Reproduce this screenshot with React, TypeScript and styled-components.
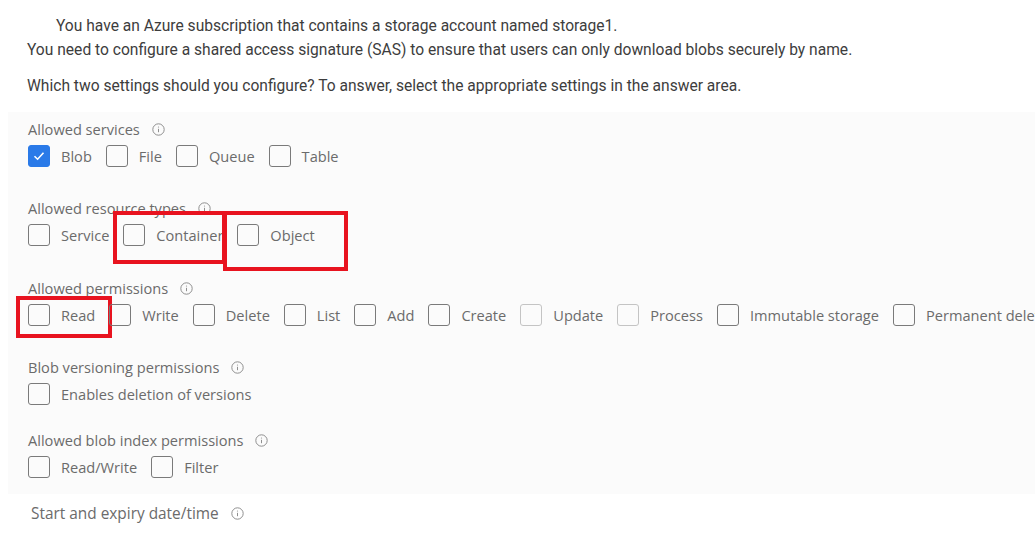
import React from "react";
import styled, { createGlobalStyle } from "styled-components";

const Global = createGlobalStyle`
  html, body { margin: 0; padding: 0; background: #ffffff; }
  body { width: 1035px; height: 536px; overflow: hidden; }
`;

const Page = styled.div`
  display: flex;
  flex-direction: column;
  width: 1035px;
  height: 536px;
  overflow: hidden;
  background: #ffffff;
`;

const Question = styled.div`
  display: flex;
  flex-direction: column;
  padding: 14px 0 0 27px;
  font-family: Roboto, "Liberation Sans", sans-serif;
  font-size: 15.6px;
  color: #3d3d3d;
`;

const QLine = styled.p<{ $indent?: number; $gap?: number }>`
  margin: ${(p) => p.$gap ?? 0}px 0 0 ${(p) => p.$indent ?? 0}px;
  line-height: 24px;
  white-space: nowrap;
`;

const Panel = styled.div`
  display: flex;
  flex-direction: column;
  margin: 14px 0 0 8px;
  padding: 7px 0 17px 20px;
  background: #fbfbfb;
  font-family: "Open Sans", "Noto Sans", sans-serif;
  font-size: 14.6px;
  color: #6b6b6b;
  overflow: hidden;
`;

const Section = styled.div<{ $after?: number }>`
  display: flex;
  flex-direction: column;
  gap: 6px;
  margin-bottom: ${(p) => p.$after ?? 0}px;
`;

const LabelRow = styled.div`
  display: flex;
  align-items: center;
  gap: 12px;
  height: 20px;
  white-space: nowrap;
`;

const Row = styled.div`
  display: flex;
  align-items: center;
  gap: 14px;
  height: 22px;
  white-space: nowrap;
`;

const Item = styled.div`
  position: relative;
  display: flex;
  align-items: center;
  gap: 11px;
  flex-shrink: 0;
`;

const Box = styled.span<{ $checked?: boolean; $faint?: boolean }>`
  display: inline-flex;
  align-items: center;
  justify-content: center;
  box-sizing: border-box;
  width: 22px;
  height: 22px;
  border-radius: 3px;
  border: 1.5px solid
    ${(p) => (p.$checked ? "#2a7ae8" : p.$faint ? "#c4c4c4" : "#7a7a7a")};
  background: ${(p) => (p.$checked ? "#2a7ae8" : "transparent")};
`;

const ItemText = styled.span`
  color: #6b6b6b;
`;

const Frame = styled.div<{ $t: number; $l: number; $r: number; $b: number }>`
  position: absolute;
  top: ${(p) => p.$t}px;
  left: ${(p) => p.$l}px;
  right: ${(p) => p.$r}px;
  bottom: ${(p) => p.$b}px;
  border: 4px solid #e8131f;
  pointer-events: none;
`;

const Bottom = styled.div`
  display: flex;
  align-items: center;
  gap: 12px;
  width: 246px;
  height: 38px;
  margin-left: 16px;
  padding: 0 0 4px 15px;
  background: #ffffff;
  font-family: "Open Sans", "Noto Sans", sans-serif;
  font-size: 15.4px;
  color: #6b6b6b;
  white-space: nowrap;
`;

const Info = () => (
  <svg width="13" height="13" viewBox="0 0 13 13">
    <circle cx="6.5" cy="6.5" r="5.7" fill="none" stroke="#8f8f8f" strokeWidth="1" />
    <line x1="6.5" y1="5.8" x2="6.5" y2="9.2" stroke="#8f8f8f" strokeWidth="1" />
    <circle cx="6.5" cy="4" r="0.6" fill="#8f8f8f" />
  </svg>
);

const Check = () => (
  <svg width="14" height="14" viewBox="0 0 14 14">
    <path d="M2.5 7.2 L5.6 10.2 L11.5 3.8" fill="none" stroke="#ffffff" strokeWidth="1.6" />
  </svg>
);

type Opt = {
  label: string;
  checked?: boolean;
  faint?: boolean;
  frame?: { t: number; l: number; r: number; b: number };
};

const Option = ({ o }: { o: Opt }) => (
  <Item>
    <Box $checked={o.checked} $faint={o.faint}>
      {o.checked && <Check />}
    </Box>
    <ItemText>{o.label}</ItemText>
    {o.frame && <Frame $t={o.frame.t} $l={o.frame.l} $r={o.frame.r} $b={o.frame.b} />}
  </Item>
);

const sections: { label: string; after: number; options: Opt[] }[] = [
  {
    label: "Allowed services",
    after: 31,
    options: [
      { label: "Blob", checked: true },
      { label: "File" },
      { label: "Queue" },
      { label: "Table" },
    ],
  },
  {
    label: "Allowed resource types",
    after: 32,
    options: [
      { label: "Service" },
      { label: "Container", frame: { t: -13, l: -10, r: -3, b: -18 } },
      { label: "Object", frame: { t: -13, l: -14, r: -33, b: -25 } },
    ],
  },
  {
    label: "Allowed permissions",
    after: 31,
    options: [
      { label: "Read", frame: { t: -8, l: -12, r: -17, b: -12 } },
      { label: "Write" },
      { label: "Delete" },
      { label: "List" },
      { label: "Add" },
      { label: "Create" },
      { label: "Update", faint: true },
      { label: "Process", faint: true },
      { label: "Immutable storage" },
      { label: "Permanent delete" },
    ],
  },
  {
    label: "Blob versioning permissions",
    after: 25,
    options: [{ label: "Enables deletion of versions" }],
  },
  {
    label: "Allowed blob index permissions",
    after: 0,
    options: [{ label: "Read/Write" }, { label: "Filter" }],
  },
];

export default function App() {
  return (
    <Page>
      <Global />
      <Question>
        <QLine $indent={29}>
          You have an Azure subscription that contains a storage account named storage1.
        </QLine>
        <QLine>
          You need to configure a shared access signature (SAS) to ensure that users can only
          download blobs securely by name.
        </QLine>
        <QLine $gap={12}>
          Which two settings should you configure? To answer, select the appropriate settings in
          the answer area.
        </QLine>
      </Question>
      <Panel>
        {sections.map((s) => (
          <Section key={s.label} $after={s.after}>
            <LabelRow>
              <span>{s.label}</span>
              <Info />
            </LabelRow>
            <Row>
              {s.options.map((o) => (
                <Option key={o.label} o={o} />
              ))}
            </Row>
          </Section>
        ))}
      </Panel>
      <Bottom>
        <span>Start and expiry date/time</span>
        <Info />
      </Bottom>
    </Page>
  );
}
